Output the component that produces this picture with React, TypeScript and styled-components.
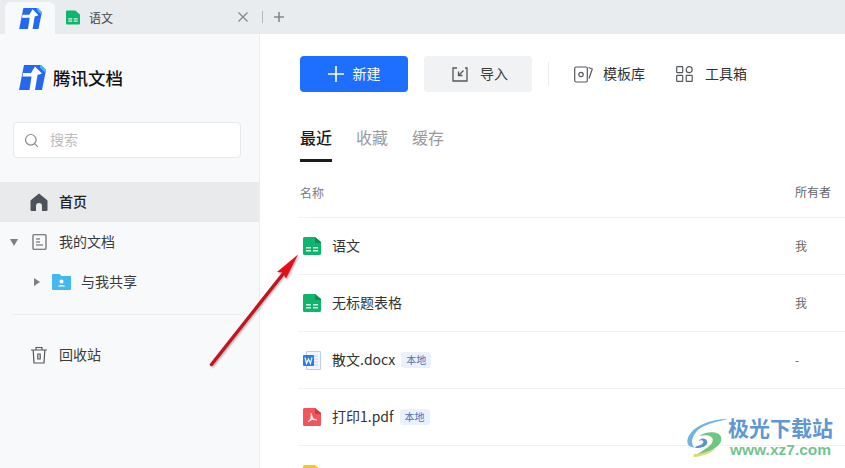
import React from "react";
import styled, { createGlobalStyle } from "styled-components";

const Global = createGlobalStyle`
  html, body { margin: 0; padding: 0; background: #fff; }
  body { font-family: "Noto Sans CJK SC", "Liberation Sans", sans-serif; }
  * { box-sizing: border-box; }
`;

const Frame = styled.div`
  position: relative;
  width: 845px;
  height: 468px;
  overflow: hidden;
  display: flex;
  flex-direction: column;
  background: #fff;
  color: #2b2b2b;
`;

const TabBar = styled.div`
  height: 34px;
  flex: none;
  background: #e9ecef;
  display: flex;
  align-items: flex-end;
  padding-left: 5px;
`;

const HomeTab = styled.div`
  width: 50px;
  height: 32px;
  background: #f8f9fb;
  border-radius: 6px 6px 0 0;
  display: flex;
  align-items: center;
  justify-content: center;
`;

const DocTab = styled.div`
  width: 202px;
  height: 34px;
  display: flex;
  align-items: center;
  padding: 0 8px 0 11px;
  font-size: 12px;
  color: #444;
`;

const DocTabTitle = styled.span`
  margin-left: 9px;
  flex: 1;
`;

const TabActions = styled.div`
  display: flex;
  align-items: center;
  height: 34px;
`;

const TabSep = styled.div`
  width: 1px;
  height: 12px;
  background: #b4b8bc;
  margin: 0 10px 0 5px;
`;

const Body = styled.div`
  flex: 1;
  min-height: 0;
  display: flex;
`;

const Sidebar = styled.aside`
  width: 260px;
  flex: none;
  background: #f8f9fb;
  border-right: 1px solid #eceef0;
  display: flex;
  flex-direction: column;
`;

const Brand = styled.div`
  display: flex;
  align-items: center;
  gap: 7px;
  padding: 31px 0 0 19px;
  height: 56px;
`;

const BrandName = styled.div`
  font-size: 17.5px;
  font-weight: 500;
  color: #111;
  line-height: 25px;
`;

const Search = styled.div`
  margin: 32px 18px 0 13px;
  height: 36px;
  background: #fff;
  border: 1px solid #e6e8ea;
  border-radius: 4px;
  display: flex;
  align-items: center;
  padding-left: 10px;
  gap: 11px;
  font-size: 14px;
  color: #bcbcbc;
`;

/* Lifts CJK text a little: the font sits low in its line box. */
const Label = styled.span`
  padding-bottom: 3px;
`;

const Nav = styled.nav<{ $top: number }>`
  margin-top: ${(p) => p.$top}px;
  display: flex;
  flex-direction: column;
`;

const NavRow = styled.div<{ $active?: boolean; $indent?: number; $gap?: number; $strong?: boolean }>`
  height: 40px;
  display: flex;
  align-items: center;
  padding-left: ${(p) => p.$indent ?? 30}px;
  gap: ${(p) => p.$gap ?? 11}px;
  font-size: 14px;
  font-weight: ${(p) => (p.$strong ? 500 : 400)};
  color: ${(p) => (p.$strong ? "#222" : "#3a3a3a")};
  background: ${(p) => (p.$active ? "#e9eaec" : "transparent")};
`;

const Caret = styled.span<{ $open?: boolean }>`
  width: 0;
  height: 0;
  ${(p) =>
    p.$open
      ? `border-left: 4.5px solid transparent; border-right: 4.5px solid transparent; border-top: 7px solid #7d7f82; margin-right: 2px;`
      : `border-top: 4.5px solid transparent; border-bottom: 4.5px solid transparent; border-left: 6px solid #7d7f82; margin-right: 2px;`}
`;

const SideDivider = styled.div`
  height: 1px;
  background: #ebedef;
  margin: 12px 18px 0 12px;
`;

const Main = styled.main`
  flex: 1;
  min-width: 0;
  min-height: 0;
  padding: 22px 0 0 40px;
  display: flex;
  flex-direction: column;
`;

const Toolbar = styled.div`
  display: flex;
  align-items: center;
  flex: none;
  height: 36px;
`;

const ActionButton = styled.button<{ $primary?: boolean }>`
  width: 108px;
  height: 36px;
  margin-right: 16px;
  border: 0;
  border-radius: 4px;
  font: inherit;
  font-size: 14px;
  display: flex;
  align-items: center;
  justify-content: center;
  gap: ${(p) => (p.$primary ? 9 : 12)}px;
  padding: 0 0 0 ${(p) => (p.$primary ? 0 : 4)}px;
  background: ${(p) => (p.$primary ? "#1e6fff" : "#f1f2f4")};
  color: ${(p) => (p.$primary ? "#fff" : "#3a3a3a")};
`;

const ToolSep = styled.div`
  width: 1px;
  height: 24px;
  background: #e9ebed;
  margin-right: 25px;
`;

const ToolLink = styled.div<{ $gap: number }>`
  display: flex;
  align-items: center;
  gap: ${(p) => p.$gap}px;
  font-size: 14px;
  color: #333;
  margin-right: 31px;
`;

const Tabs = styled.div`
  display: flex;
  flex: none;
  gap: 24px;
  margin-top: 35px;
`;

const Tab = styled.div<{ $active?: boolean }>`
  height: 35px;
  font-size: 16px;
  line-height: 20px;
  font-weight: ${(p) => (p.$active ? 500 : 400)};
  color: ${(p) => (p.$active ? "#1c1c1c" : "#9a9a9a")};
  border-bottom: 3px solid ${(p) => (p.$active ? "#1c1c1c" : "transparent")};
`;

const HeaderRow = styled.div`
  display: flex;
  flex: none;
  align-items: center;
  height: 56px;
  margin-left: -2px;
  padding: 6px 0 0 2px;
  font-size: 12px;
  color: #7c7c7c;
  border-bottom: 1px solid #f0f1f2;
`;

const FileRow = styled.div`
  display: flex;
  align-items: center;
  flex: none;
  height: 57px;
  margin-left: -2px;
  padding-left: 5px;
  border-bottom: 1px solid #f0f1f2;
`;

const FileName = styled.div`
  display: flex;
  align-items: center;
  flex: 1;
  min-width: 0;
  margin-left: 11px;
  font-size: 14px;
  color: #333;
`;

const LocalBadge = styled.span`
  margin-left: 6px;
  width: 30px;
  height: 16px;
  border-radius: 3px;
  background: #eaf1fc;
  color: #4a72b8;
  font-size: 10px;
  line-height: 15px;
  text-align: center;
`;

const Owner = styled.div`
  width: 50px;
  flex: none;
  font-size: 12px;
  padding-bottom: 2px;
  color: #666;
`;

const HeaderName = styled.div`
  flex: 1;
`;

const Arrow = styled.svg`
  position: absolute;
  left: 200px;
  top: 245px;
  pointer-events: none;
`;

const Watermark = styled.div`
  position: absolute;
  left: 686px;
  top: 414px;
  display: flex;
  align-items: flex-start;
  pointer-events: none;
`;

const Swirl = styled.svg`
  margin-top: 3px;
  flex: none;
`;

const WatermarkText = styled.div`
  display: flex;
  flex-direction: column;
`;

const WatermarkTitle = styled.div`
  font-size: 21px;
  line-height: 26px;
  font-weight: 700;
  color: #5f97d4;
  white-space: nowrap;
`;

const WatermarkUrl = styled.div`
  font-family: "Liberation Sans", sans-serif;
  font-size: 15.5px;
  line-height: 18px;
  margin: 1px 0 0 2px;
  font-weight: 700;
  color: #74c48f;
  white-space: nowrap;
`;

const Logo = ({ w, h }: { w: number; h: number }) => (
  <svg width={w} height={h} viewBox="0 0 27 25">
    <path d="M5 0H22L27 5L23 25H0Z" fill="#2468f2" />
    <path d="M21 0H22.5L27 5L26.4 8L21 2.5Z" fill="#4fb6ef" />
    <path d="M4 8L12 8L16 1.5L23 8.5L18.5 10L16 25H10.5L12.5 11.5L3.5 11.5Z" fill="#fff" />
  </svg>
);

const Sheet = () => (
  <svg width="18" height="18" viewBox="0 0 18 18">
    <path d="M1.5 0H12L18 5V16.5A1.5 1.5 0 0 1 16.5 18H1.5A1.5 1.5 0 0 1 0 16.5V1.5A1.5 1.5 0 0 1 1.5 0Z" fill="#10b56d" />
    <path d="M12 0L18 5V6H13A1 1 0 0 1 12 5Z" fill="#0c8f56" />
    <path d="M3 10H8V11.6H3ZM10 10H15V11.6H10ZM3 13H8V14.6H3ZM10 13H15V14.6H10Z" fill="#d5f5e5" />
  </svg>
);

const WordIcon = () => (
  <svg width="18" height="19" viewBox="0 0 18 19">
    <path d="M3.5 .5H17.5V18.5H3.5Z" fill="#f3f7fd" stroke="#b9d0f0" />
    <path d="M11 5H15M11 8H15M11 11H15M11 14H15" stroke="#c4d6ef" strokeWidth="1" />
    <rect x="0" y="4" width="11" height="11" rx="1" fill="#2f7be5" />
    <path d="M2 6.5L3.6 12.5L5.5 8L7.4 12.5L9 6.5" fill="none" stroke="#fff" strokeWidth="1.2" />
  </svg>
);

const PdfIcon = () => (
  <svg width="18" height="18" viewBox="0 0 18 18">
    <path d="M1.5 0H12L18 5V16.5A1.5 1.5 0 0 1 16.5 18H1.5A1.5 1.5 0 0 1 0 16.5V1.5A1.5 1.5 0 0 1 1.5 0Z" fill="#f2545b" />
    <path d="M12 0L18 5V6H13A1 1 0 0 1 12 5Z" fill="#c93c43" />
    <path d="M8 5L10 10.5L14 12L9 11.5L5 14L7.8 10.5Z" fill="#fff" stroke="#fff" strokeWidth=".6" />
  </svg>
);

const YellowIcon = () => (
  <svg width="18" height="18" viewBox="0 0 18 18">
    <path d="M1.5 0H12L18 5V16.5A1.5 1.5 0 0 1 16.5 18H1.5A1.5 1.5 0 0 1 0 16.5V1.5A1.5 1.5 0 0 1 1.5 0Z" fill="#f6c42c" />
  </svg>
);

const files = [
  { name: "语文", icon: <Sheet />, owner: "我" },
  { name: "无标题表格", icon: <Sheet />, owner: "我" },
  { name: "散文.docx", icon: <WordIcon />, owner: "-", local: true },
  { name: "打印1.pdf", icon: <PdfIcon />, owner: "-", local: true },
];

export default function App() {
  return (
    <Frame>
      <Global />
      <TabBar>
        <HomeTab>
          <Logo w={23} h={21} />
        </HomeTab>
        <DocTab>
          <svg width="14" height="15" viewBox="0 0 18 18">
            <path d="M1.5 0H12L18 5V16.5A1.5 1.5 0 0 1 16.5 18H1.5A1.5 1.5 0 0 1 0 16.5V1.5A1.5 1.5 0 0 1 1.5 0Z" fill="#10b56d" />
            <path d="M3 10H8V11.6H3ZM10 10H15V11.6H10ZM3 13H8V14.6H3ZM10 13H15V14.6H10Z" fill="#d5f5e5" />
          </svg>
          <DocTabTitle>语文</DocTabTitle>
          <svg width="12" height="12" viewBox="0 0 12 12">
            <path d="M1.5 1.5L10.5 10.5M10.5 1.5L1.5 10.5" stroke="#85888b" strokeWidth="1.3" />
          </svg>
        </DocTab>
        <TabActions>
          <TabSep />
          <svg width="12" height="12" viewBox="0 0 12 12">
            <path d="M6 1V11M1 6H11" stroke="#85888b" strokeWidth="1.6" />
          </svg>
        </TabActions>
      </TabBar>
      <Body>
        <Sidebar>
          <Brand>
            <Logo w={27} h={25} />
            <BrandName>腾讯文档</BrandName>
          </Brand>
          <Search>
            <svg width="15" height="15" viewBox="0 0 15 15" fill="none">
              <circle cx="6.8" cy="6.8" r="5.3" stroke="#8a8c8f" strokeWidth="1.2" />
              <path d="M10.8 10.8L13.8 13.8" stroke="#8a8c8f" strokeWidth="1.2" />
            </svg>
            <Label>搜索</Label>
          </Search>
          <Nav $top={24}>
            <NavRow $active $strong>
              <svg width="18" height="18" viewBox="0 0 18 18">
                <path d="M9 0.5L17 7A1 1 0 0 1 17.5 8V17A1 1 0 0 1 16.5 18H12V13A3 3 0 0 0 6 13V18H1.5A1 1 0 0 1 .5 17V8A1 1 0 0 1 1 7Z" fill="#4d5159" />
              </svg>
              <Label>首页</Label>
            </NavRow>
            <NavRow $indent={10} $gap={12}>
              <Caret $open />
              <svg width="15" height="16" viewBox="0 0 15 16" fill="none" stroke="#55585c" strokeWidth="1.1">
                <rect x="1" y="0.7" width="13" height="14.6" rx="0.8" />
                <path d="M4 5H8M4 8H8M4 11H11" />
              </svg>
              <Label>我的文档</Label>
            </NavRow>
            <NavRow $indent={34} $gap={10}>
              <Caret />
              <svg width="19" height="16" viewBox="0 0 19 16">
                <path d="M1 0H7.5L9.5 2H18A1 1 0 0 1 19 3V15A1 1 0 0 1 18 16H1A1 1 0 0 1 0 15V1A1 1 0 0 1 1 0Z" fill="#42b8ef" />
                <circle cx="9.5" cy="7.5" r="2" fill="#fff" />
                <path d="M6 12.5C6 10.5 13 10.5 13 12.5Z" fill="#fff" />
              </svg>
              <Label>与我共享</Label>
            </NavRow>
          </Nav>
          <SideDivider />
          <Nav $top={20}>
            <NavRow>
              <svg width="18" height="18" viewBox="0 0 18 18" fill="none" stroke="#55585c" strokeWidth="1.2">
                <path d="M1 4H17M6 4V1.5H12V4M3.2 4L4 17H14L14.8 4" />
                <path d="M7.8 8V13H10.2V8Z" />
              </svg>
              <Label>回收站</Label>
            </NavRow>
          </Nav>
        </Sidebar>
        <Main>
          <Toolbar>
            <ActionButton $primary>
              <svg width="16" height="16" viewBox="0 0 16 16">
                <path d="M8 0V16M0 8H16" stroke="#fff" strokeWidth="1.6" />
              </svg>
              <Label>新建</Label>
            </ActionButton>
            <ActionButton>
              <svg width="16" height="15" viewBox="0 0 16 15" fill="none" stroke="#55585c" strokeWidth="1.3">
                <path d="M5 1H1V14H15V1H13" />
                <path d="M11.5 3.5L7 8M6.5 4.5V8.5H10.5" />
              </svg>
              <Label>导入</Label>
            </ActionButton>
            <ToolSep />
            <ToolLink $gap={10}>
              <svg width="19" height="17" viewBox="0 0 19 17" fill="none" stroke="#55585c" strokeWidth="1.2">
                <rect x="0.7" y="1" width="12.6" height="15" rx="1.5" />
                <circle cx="7" cy="8.5" r="2.2" />
                <path d="M14.5 1.5L18.3 3L15 12.5" />
              </svg>
              <Label>模板库</Label>
            </ToolLink>
            <ToolLink $gap={12}>
              <svg width="17" height="16" viewBox="0 0 17 16" fill="none" stroke="#55585c" strokeWidth="1.2">
                <rect x="0.7" y="0.7" width="6" height="6" rx="0.6" />
                <circle cx="13.2" cy="3.7" r="3" />
                <rect x="0.7" y="9.3" width="6" height="6" rx="0.6" />
                <rect x="10.2" y="9.3" width="6" height="6" rx="0.6" />
              </svg>
              <Label>工具箱</Label>
            </ToolLink>
          </Toolbar>
          <Tabs>
            <Tab $active>最近</Tab>
            <Tab>收藏</Tab>
            <Tab>缓存</Tab>
          </Tabs>
          <HeaderRow>
            <HeaderName>名称</HeaderName>
            <Owner>所有者</Owner>
          </HeaderRow>
          {files.map((f) => (
            <FileRow key={f.name}>
              {f.icon}
              <FileName>
                <Label>{f.name}</Label>
                {f.local && <LocalBadge>本地</LocalBadge>}
              </FileName>
              <Owner>{f.owner}</Owner>
            </FileRow>
          ))}
          <FileRow>
            <YellowIcon />
          </FileRow>
        </Main>
      </Body>

      <Arrow width="110" height="130" viewBox="0 0 110 130">
        <defs>
          <filter id="as" x="-20%" y="-20%" width="140%" height="140%">
            <feDropShadow dx="1" dy="1" stdDeviation="1" floodColor="#000" floodOpacity="0.35" />
          </filter>
        </defs>
        <g filter="url(#as)">
          <path d="M11.5 119.5L83 29" stroke="#c0171f" strokeWidth="3.4" strokeLinecap="round" />
          <path d="M98 9.5L77 27L82.5 27.5L86 33.5Z" fill="#e8101c" />
        </g>
      </Arrow>

      <Watermark>
        <Swirl width="42" height="42" viewBox="0 0 44 42">
          <path d="M44 1C26 1 7 8 2 21C0 27 3 31 9 31C3 26 8 14 18 9C26 5 36 3 44 1Z" fill="#6eb5e6" />
          <path d="M9 31C16 33 24 29 22 24C20 20 14 21 13 25C16 22 19 24 18 26C16 29 11 29 9 31Z" fill="#5c92d2" />
          <path d="M14 19C22 13 36 14 37 21C38 29 26 36 8 40C20 33 29 28 28 22C27 18 20 17 14 19Z" fill="#6fc682" />
          <path d="M8 41C18 40 26 37 31 32C26 34 16 38 8 38Z" fill="#d9de73" />
        </Swirl>
        <WatermarkText>
          <WatermarkTitle>极光下载站</WatermarkTitle>
          <WatermarkUrl>www.xz7.com</WatermarkUrl>
        </WatermarkText>
      </Watermark>
    </Frame>
  );
}
